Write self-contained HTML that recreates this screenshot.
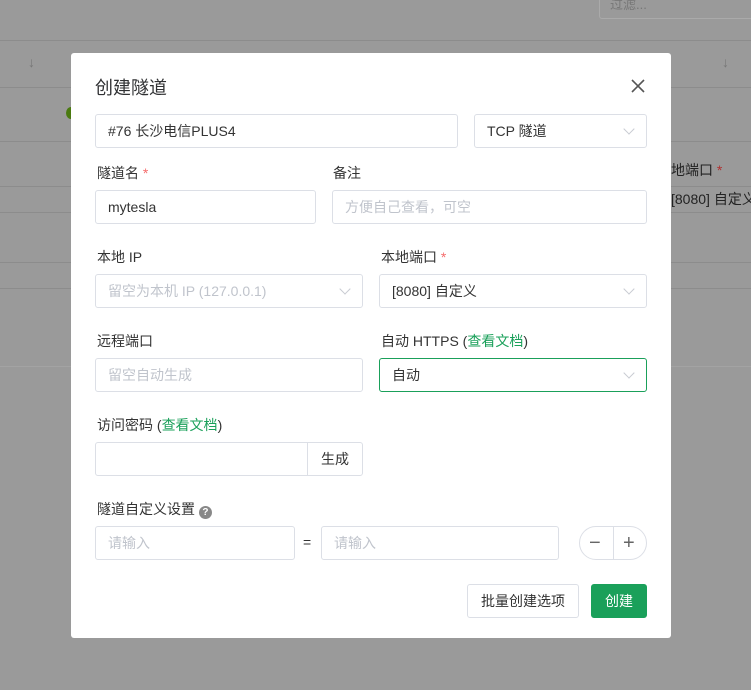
<!DOCTYPE html><html><head><meta charset="utf-8"><style>
body{margin:0;width:751px;height:690px;background:#9a9a9a;position:relative;overflow:hidden;font-family:"Liberation Sans","Noto Sans CJK SC",sans-serif;font-size:14px;color:#333}
.l{position:absolute;left:0;right:0;height:1px;background:#8c8c8c}
.a{position:absolute;white-space:nowrap}
.modal{position:absolute;left:71px;top:53px;width:600px;height:585px;background:#fff;border-radius:3px}
.in{position:absolute;box-sizing:border-box;border:1px solid #dcdfe6;border-radius:3px;height:34px;line-height:32px;padding-left:12px;font-size:14px;color:#333;background:#fff;white-space:nowrap}
.ph{color:#c0c4cc}
.lab{position:absolute;font-size:14px;color:#333}
.req{color:#f56c6c}
.g{color:#1aa05a}
.chev{position:absolute;right:13px;top:10px;width:7px;height:7px;border-right:1px solid #c8cbd2;border-bottom:1px solid #c8cbd2;transform:rotate(45deg)}
</style></head><body>
<div class="l" style="top:40px"></div>
<div class="l" style="top:87px"></div>
<div class="l" style="top:141px"></div>
<div class="l" style="top:186px"></div>
<div class="l" style="top:212px"></div>
<div class="l" style="top:262px"></div>
<div class="l" style="top:288px"></div>
<div class="l" style="top:366px;background:#a3a3a3"></div>
<div class="a" style="left:599px;top:-6px;width:160px;height:23px;border:1px solid #aaa;border-radius:3px;color:#777;font-size:13px;padding-left:10px;line-height:20px">过滤...</div>
<div class="a" style="left:28px;top:54px;color:#777">↓</div>
<div class="a" style="left:722px;top:54px;color:#777">↓</div>
<div class="a" style="left:66px;top:107px;width:10px;height:12px;border-radius:50%;background:#4a7a10"></div>
<div class="a" style="left:671px;top:160px;color:#222">地端口 <span style="color:#b03030">*</span></div>
<div class="a" style="left:671px;top:189px;color:#222">[8080] 自定义</div>
<div class="modal">
<div class="a" style="left:24px;top:21px;font-size:18px;color:#303133">创建隧道</div>
<svg class="a" style="left:560px;top:26px" width="14" height="14"><path d="M1 1L13 13M13 1L1 13" stroke="#555" stroke-width="1.6"/></svg>
<div class="in" style="left:24px;top:61px;width:363px">#76 长沙电信PLUS4</div>
<div class="in" style="left:403px;top:61px;width:173px">TCP 隧道<div class="chev"></div></div>
<div class="lab" style="left:26px;top:110px">隧道名 <span class="req">*</span></div>
<div class="lab" style="left:262px;top:110px">备注</div>
<div class="in" style="left:24px;top:137px;width:221px">mytesla</div>
<div class="in ph" style="left:261px;top:137px;width:315px">方便自己查看，可空</div>
<div class="lab" style="left:26px;top:194px">本地 IP</div>
<div class="lab" style="left:310px;top:194px">本地端口 <span class="req">*</span></div>
<div class="in ph" style="left:24px;top:221px;width:268px">留空为本机 IP (127.0.0.1)<div class="chev"></div></div>
<div class="in" style="left:308px;top:221px;width:268px">[8080] 自定义<div class="chev"></div></div>
<div class="lab" style="left:26px;top:278px">远程端口</div>
<div class="lab" style="left:310px;top:278px">自动 HTTPS (<span class="g">查看文档</span>)</div>
<div class="in ph" style="left:24px;top:305px;width:268px">留空自动生成</div>
<div class="in" style="left:308px;top:305px;width:268px;border-color:#1aa05a">自动<div class="chev"></div></div>
<div class="lab" style="left:26px;top:362px">访问密码 (<span class="g">查看文档</span>)</div>
<div class="in" style="left:24px;top:389px;width:268px"><div class="a" style="left:211px;top:0;bottom:0;width:1px;background:#dcdfe6"></div><div class="a" style="left:225px;top:0">生成</div></div>
<div class="lab" style="left:26px;top:446px">隧道自定义设置 <span style="display:inline-block;width:13px;height:13px;border-radius:50%;background:#888;color:#fff;font-size:10px;line-height:13px;text-align:center;font-weight:bold;vertical-align:-1px">?</span></div>
<div class="in ph" style="left:24px;top:473px;width:200px">请输入</div>
<div class="a" style="left:232px;top:481px">=</div>
<div class="in ph" style="left:250px;top:473px;width:238px">请输入</div>
<div class="in" style="left:508px;top:473px;width:68px;border-radius:17px;padding:0"><div class="a" style="left:33px;top:0;bottom:0;width:1px;background:#dcdfe6"></div><div class="a" style="left:9px;top:0;font-size:20px;color:#666">−</div><div class="a" style="left:43px;top:0;font-size:20px;color:#666">+</div></div>
<div class="in" style="left:396px;top:531px;width:112px;padding:0;text-align:center">批量创建选项</div>
<div class="in" style="left:520px;top:531px;width:56px;padding:0;text-align:center;background:#1aa05a;border-color:#1aa05a;color:#fff">创建</div>
</div>
</body></html>
